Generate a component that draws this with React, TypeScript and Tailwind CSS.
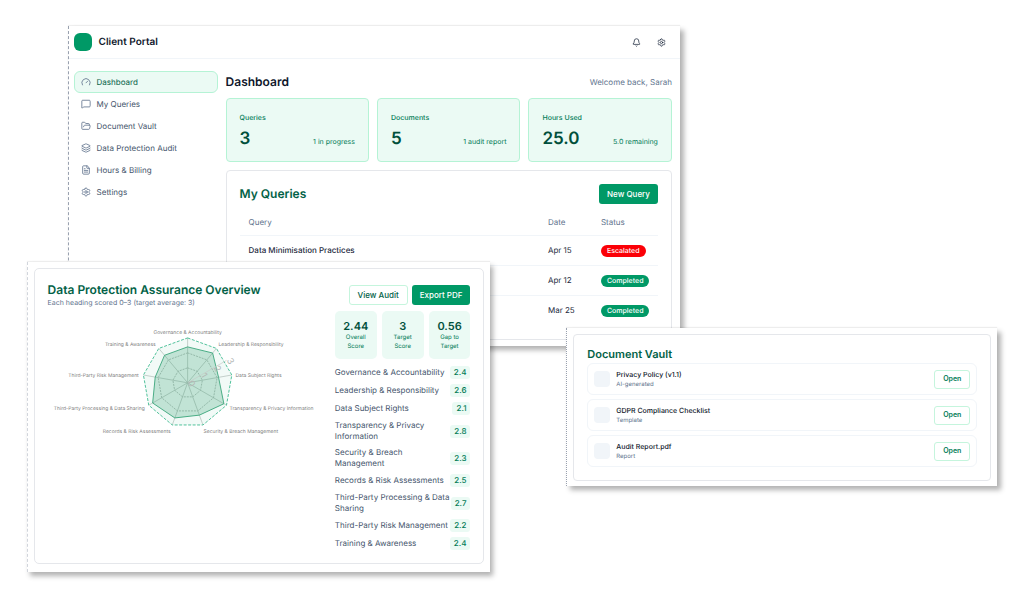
import { Bell, FileText, FolderOpen, Gauge, Layers, MessageSquare, Settings } from "lucide-react";
import type { LucideIcon } from "lucide-react";

const navItems: { label: string; icon: LucideIcon }[] = [
  { label: "Dashboard", icon: Gauge },
  { label: "My Queries", icon: MessageSquare },
  { label: "Document Vault", icon: FolderOpen },
  { label: "Data Protection Audit", icon: Layers },
  { label: "Hours & Billing", icon: FileText },
  { label: "Settings", icon: Settings },
];

const stats = [
  { label: "Queries", value: "3", note: "1 in progress" },
  { label: "Documents", value: "5", note: "1 audit report" },
  { label: "Hours Used", value: "25.0", note: "5.0 remaining" },
];

const queries = [
  { title: "Data Minimisation Practices", date: "Apr 15", status: "Escalated" },
  { title: "", date: "Apr 12", status: "Completed" },
  { title: "", date: "Mar 25", status: "Completed" },
];

const summary = [
  { value: "2.44", label: "Overall Score" },
  { value: "3", label: "Target Score" },
  { value: "0.56", label: "Gap to Target" },
];

type Anchor = "start" | "middle" | "end";

// x / y are the chart label positions, in chart units
const headings: { name: string; score: number; x: number; y: number; anchor: Anchor }[] = [
  { name: "Governance & Accountability", score: 2.4, x: 140, y: 23, anchor: "middle" },
  { name: "Leadership & Responsibility", score: 2.6, x: 171, y: 35, anchor: "start" },
  { name: "Data Subject Rights", score: 2.1, x: 188, y: 66, anchor: "start" },
  { name: "Transparency & Privacy Information", score: 2.8, x: 182, y: 99, anchor: "start" },
  { name: "Security & Breach Management", score: 2.3, x: 156, y: 122, anchor: "start" },
  { name: "Records & Risk Assessments", score: 2.5, x: 123, y: 122, anchor: "end" },
  { name: "Third-Party Processing & Data Sharing", score: 2.7, x: 97, y: 99, anchor: "end" },
  { name: "Third-Party Risk Management", score: 2.2, x: 91, y: 66, anchor: "end" },
  { name: "Training & Awareness", score: 2.4, x: 108, y: 35, anchor: "end" },
];

const documents = [
  { name: "Privacy Policy (v1.1)", kind: "AI-generated" },
  { name: "GDPR Compliance Checklist", kind: "Template" },
  { name: "Audit Report.pdf", kind: "Report" },
];

const CX = 140;
const CY = 72;
const RADIUS = 45;

function point(index: number, value: number) {
  const angle = (index / headings.length) * Math.PI * 2;
  const r = (value / 3) * RADIUS;
  return [CX + r * Math.sin(angle), CY - r * Math.cos(angle)];
}

function ring(values: number[]) {
  return values.map((v, i) => point(i, v).map((n) => n.toFixed(2)).join(",")).join(" ");
}

function RadarChart() {
  return (
    <svg viewBox="0 0 280 144" className="w-full h-auto" role="img" aria-label="Scores by heading">
      {[1, 2].map((level) => (
        <polygon key={level} points={ring(headings.map(() => level))} fill="none" stroke="#a4aaa7" strokeWidth="0.7" strokeDasharray="2 1" />
      ))}
      {headings.map((h, i) => {
        const [x, y] = point(i, 3);
        return <line key={h.name} x1={CX} y1={CY} x2={x} y2={y} stroke="#b9bebc" strokeWidth="0.7" />;
      })}
      <polygon points={ring(headings.map(() => 3))} fill="#009966" fillOpacity="0.05" stroke="#3dbb90" strokeWidth="0.9" strokeDasharray="3 1.5" />
      <polygon points={ring(headings.map((h) => h.score))} fill="#2f9e70" fillOpacity="0.25" stroke="#3aa57b" strokeWidth="0.9" />
      <line x1={CX} y1={CY} x2={CX + 39} y2={CY - 22.5} stroke="#c4c9c7" strokeWidth="0.7" />
      {[0, 1, 2, 3].map((n) => {
        const x = CX + n * 13;
        const y = CY - n * 7.5;
        return (
          <text key={n} x={x} y={y} transform={`rotate(60 ${x} ${y})`} fontSize="9" fill="#b4b8b6">
            {n}
          </text>
        );
      })}
      {headings.map((h) => (
        <text key={h.name} x={h.x} y={h.y} textAnchor={h.anchor} fontSize="5" fill="#808080">
          {h.name}
        </text>
      ))}
    </svg>
  );
}

function PortalWindow() {
  return (
    <section className="absolute left-[6.6%] top-[26px] w-[59.8%] bg-white pb-[6px] border-l border-dashed border-l-gray-400 shadow-[4px_4px_5px_rgba(0,0,0,0.3),0_-1px_1px_rgba(0,0,0,0.06)]">
      <header className="flex items-center justify-between h-[33px] pl-[5px] pr-[14px] border-b border-slate-100">
        <div className="flex items-center gap-[7px]">
          <span className="w-[18px] h-[18px] rounded-[6px] bg-[#009966]" />
          <span className="text-[10px] font-semibold text-slate-900">Client Portal</span>
        </div>
        <div className="flex items-center gap-4 text-slate-800">
          <button aria-label="Notifications"><Bell className="w-[9px] h-[9px]" /></button>
          <button aria-label="Settings"><Settings className="w-[9px] h-[9px]" /></button>
        </div>
      </header>

      <div className="flex gap-2 pl-[5px] pr-2 pt-3">
        <nav className="w-36 shrink-0">
          {navItems.map(({ label, icon: Icon }, i) => (
            <a
              key={label}
              href="#"
              className={
                i === 0
                  ? "flex items-center gap-[6px] h-[22px] px-[6px] rounded-[6px] border border-[#b5f3d5] bg-[#ebfaf4] text-[8px] text-emerald-800"
                  : "flex items-center gap-[6px] h-[22px] px-[6px] border border-transparent text-[8px] text-slate-600"
              }
            >
              <Icon className="w-[10px] h-[10px] text-slate-500" />
              {label}
            </a>
          ))}
        </nav>

        <main className="flex-1 min-w-0">
          <div className="flex items-center justify-between h-[22px]">
            <h1 className="text-[12px] font-semibold text-slate-900">Dashboard</h1>
            <p className="text-[8px] text-slate-500">Welcome back, Sarah</p>
          </div>

          <div className="grid grid-cols-3 gap-2 mt-[5px]">
            {stats.map((s) => (
              <div key={s.label} className="h-16 px-[13px] pt-[14px] rounded-[4px] border border-[#b5f3d5] bg-[#ebfaf4]">
                <div className="text-[7px] leading-[10px] font-medium text-emerald-700">{s.label}</div>
                <div className="flex items-end justify-between mt-[6px]">
                  <span className="text-[17px] leading-5 font-semibold text-emerald-900">{s.value}</span>
                  <span className="text-[7px] leading-[14px] text-emerald-700">{s.note}</span>
                </div>
              </div>
            ))}
          </div>

          <div className="mt-2 px-[13px] pt-[13px] pb-[14px] rounded-[4px] border border-gray-200">
            <div className="flex items-center justify-between">
              <h2 className="text-[12px] font-semibold text-emerald-800">My Queries</h2>
              <button className="h-5 px-2 rounded-[3px] bg-[#009966] text-[8px] font-medium text-white">New Query</button>
            </div>
            <table className="w-full mt-[5px] text-left text-[8px] text-slate-800">
              <thead>
                <tr className="h-[26px] border-b border-slate-100 text-slate-500">
                  <th className="pl-[9px] font-normal">Query</th>
                  <th className="w-[53px] font-normal">Date</th>
                  <th className="w-[57px] font-normal">Status</th>
                </tr>
              </thead>
              <tbody>
                {queries.map((q) => (
                  <tr key={q.date} className="h-[30px] border-t border-slate-100">
                    <td className="pl-[9px] font-medium">{q.title}</td>
                    <td>{q.date}</td>
                    <td>
                      <span
                        className={
                          q.status === "Escalated"
                            ? "inline-block px-[6px] rounded-full bg-[#fb0007] text-[7px] leading-3 font-medium text-white"
                            : "inline-block px-[6px] rounded-full bg-[#009966] text-[7px] leading-3 font-medium text-white"
                        }
                      >
                        {q.status}
                      </span>
                    </td>
                  </tr>
                ))}
              </tbody>
            </table>
          </div>
        </main>
      </div>
    </section>
  );
}

function AuditWindow() {
  return (
    <section className="absolute left-[2.6%] top-[262px] w-[45.3%] bg-white px-[6px] pt-[6px] pb-[8px] border-l border-dashed border-l-gray-300 shadow-[3px_4px_5px_rgba(0,0,0,0.3),0_-1px_1px_rgba(0,0,0,0.06)]">
      <div className="px-[13px] pt-[13px] pb-[13px] rounded-[5px] border border-gray-200">
        <div className="flex justify-between">
          <div>
            <h2 className="text-[12px] leading-4 font-semibold text-emerald-800">Data Protection Assurance Overview</h2>
            <p className="text-[7px] leading-[10px] text-slate-500">Each heading scored 0–3 (target average: 3)</p>
          </div>
          <div className="flex gap-1 mt-[3px] shrink-0">
            <button className="h-5 px-2 rounded-[3px] border border-[#c5f5dd] text-[8px] font-medium text-emerald-800">View Audit</button>
            <button className="h-5 px-2 rounded-[3px] bg-[#009966] text-[8px] font-medium text-white">Export PDF</button>
          </div>
        </div>

        <div className="grid grid-cols-3 gap-2 mt-[3px]">
          <div className="col-span-2">
            <RadarChart />
          </div>
          <div>
            <div className="grid grid-cols-3 gap-[5px]">
              {summary.map((s) => (
                <div key={s.label} className="h-12 px-[6px] pt-2 rounded-[5px] bg-[#ebfaf4] text-center">
                  <div className="text-[11px] leading-[14px] font-semibold text-emerald-900">{s.value}</div>
                  <div className="text-[6px] leading-[9px] text-emerald-700">{s.label}</div>
                </div>
              ))}
            </div>
            <ul className="flex flex-col gap-[5px] mt-[7px]">
              {headings.map((h) => (
                <li key={h.name} className="flex items-center justify-between">
                  <span className="text-[8px] leading-[11px] text-slate-600">{h.name}</span>
                  <span className="px-1 rounded-[3px] bg-[#ebfaf4] text-[8px] leading-[13px] font-medium text-emerald-700">{h.score.toFixed(1)}</span>
                </li>
              ))}
            </ul>
          </div>
        </div>
      </div>
    </section>
  );
}

function VaultWindow() {
  return (
    <section className="absolute left-[55.3%] top-[328px] w-[42.1%] bg-white px-[6px] pt-[6px] pb-[5px] border-l border-dotted border-l-gray-400 shadow-[4px_4px_5px_rgba(0,0,0,0.3),0_-1px_1px_rgba(0,0,0,0.06)]">
      <div className="px-[13px] pt-[11px] pb-[13px] rounded-[4px] border border-gray-200">
        <h2 className="text-[11px] leading-4 font-semibold text-emerald-800">Document Vault</h2>
        <ul className="flex flex-col gap-1 mt-[1px]">
          {documents.map((d) => (
            <li key={d.name} className="flex items-center gap-[6px] h-8 px-[6px] rounded-[6px] border border-slate-100">
              <span className="w-4 h-4 rounded-[4px] bg-slate-100" />
              <div className="flex-1">
                <div className="text-[7px] leading-[11px] font-medium text-slate-900">{d.name}</div>
                <div className="text-[6px] leading-[9px] text-slate-500">{d.kind}</div>
              </div>
              <button className="h-[19px] px-2 rounded-[3px] border border-[#c5f5dd] text-[7px] font-semibold text-emerald-700">Open</button>
            </li>
          ))}
        </ul>
      </div>
    </section>
  );
}

export default function App() {
  return (
    <div className="relative min-h-screen overflow-hidden bg-white font-['Inter',sans-serif] antialiased [text-rendering:geometricPrecision]">
      <PortalWindow />
      <AuditWindow />
      <VaultWindow />
    </div>
  );
}
